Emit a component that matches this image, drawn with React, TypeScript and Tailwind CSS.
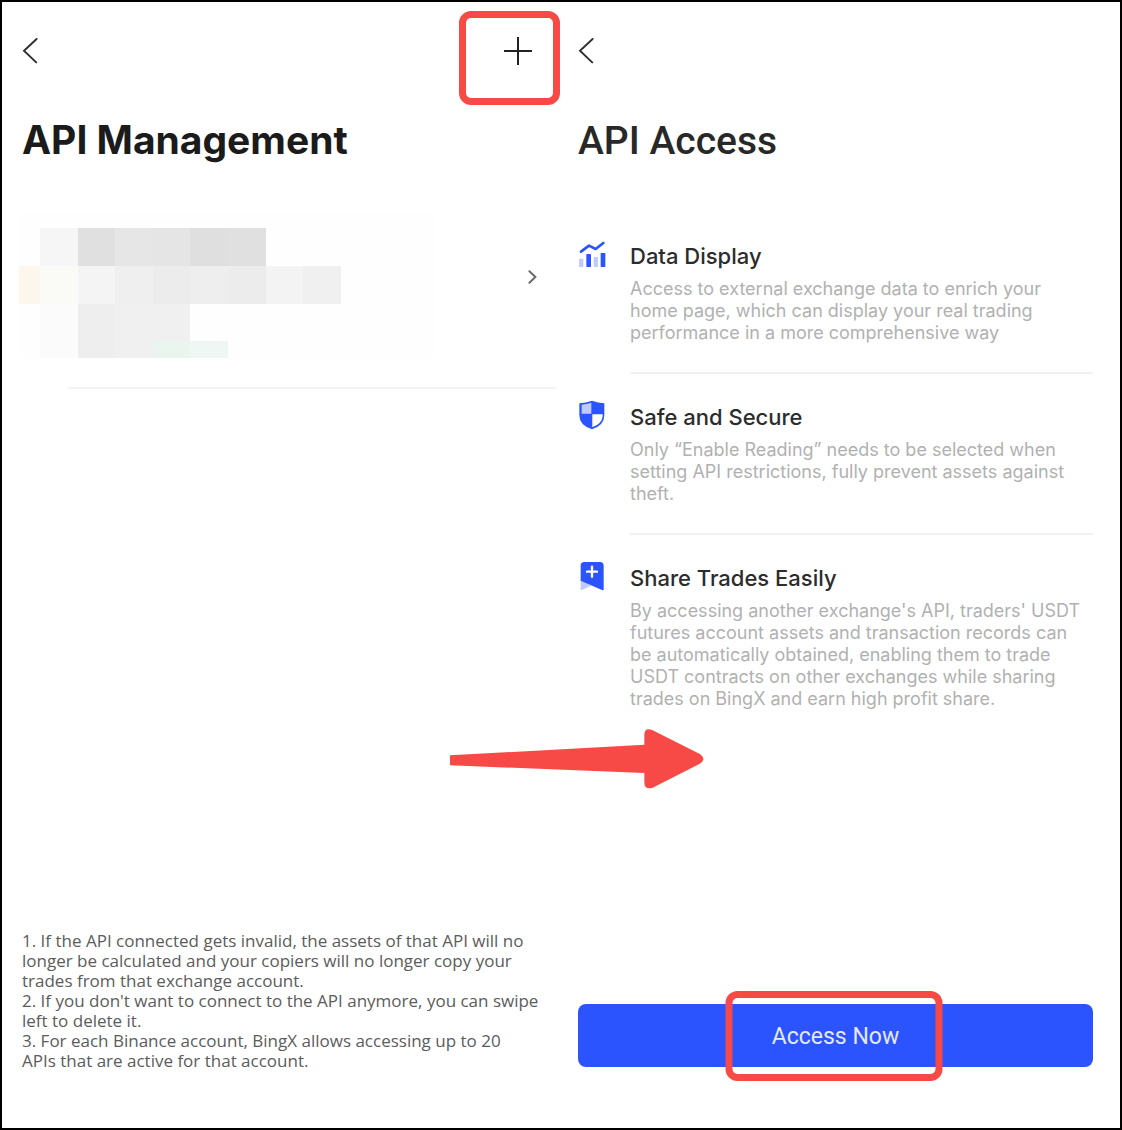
import type { ReactNode } from "react";

const BackIcon = () => (
  <svg width="16" height="26" viewBox="0 0 16 26" fill="none" stroke="#2e2e2e" strokeWidth="1.9" strokeLinecap="round">
    <path d="M14.6 1L2 12.8L14.2 24.4" />
  </svg>
);

const PlusIcon = () => (
  <svg width="30" height="30" viewBox="0 0 30 30" stroke="#222222" strokeWidth="2">
    <path d="M15 1V29M1 15H29" />
  </svg>
);

const ChevronRight = () => (
  <svg width="10" height="14" viewBox="0 0 10 14" fill="none" stroke="#6b6b6b" strokeWidth="2" strokeLinecap="round">
    <path d="M1.4 1.2L7.4 7L1.4 12.8" />
  </svg>
);

const ChartIcon = () => (
  <svg className="shrink-0" width="28" height="30" viewBox="24 27 84 90">
    <rect x="27" y="86" width="13" height="25" rx="2" fill="#bfcbff" />
    <rect x="49" y="72" width="14" height="39" rx="2" fill="#2b54ff" />
    <rect x="71" y="81" width="13" height="30" rx="2" fill="#bfcbff" />
    <rect x="92" y="69" width="14" height="42" rx="2" fill="#2b54ff" />
    <path d="M33 65L57 47L77 57L100 39" fill="none" stroke="#2b54ff" strokeWidth="8" strokeLinecap="round" strokeLinejoin="round" />
  </svg>
);

const ShieldIcon = () => (
  <svg className="shrink-0" width="28" height="30" viewBox="24 30 84 90">
    <path d="M66 32Q84 39 103 40V76Q103 106 66 118Q28 106 28 76V40Q48 39 66 32Z" fill="#2b54ff" />
    <path d="M64 38Q50 43 35 44V71H64Z" fill="#bfcbff" />
    <path d="M67 73H98V78Q96 101 67 112Z" fill="#ffffff" />
  </svg>
);

const BookmarkIcon = () => (
  <svg className="shrink-0" width="28" height="30" viewBox="24 33 84 90">
    <path d="M32 88V120Q34 121 37 119L63 107Z" fill="#bfcbff" />
    <path d="M32 92V47Q32 36 43 36H90Q101 36 101 47V117Q101 122 96 120Z" fill="#2b54ff" />
    <path d="M66 50V80M51 65H81" stroke="#ffffff" strokeWidth="7" strokeLinecap="round" />
  </svg>
);

const cells = [
  [21, 15, 38, 38, "#f6f6f6"],
  [59, 15, 37, 38, "#e0e0e0"],
  [96, 15, 38, 38, "#e6e6e6"],
  [134, 15, 37, 38, "#e5e5e5"],
  [171, 15, 38, 38, "#dfdfdf"],
  [209, 15, 38, 38, "#e0e0e0"],
  [0, 53, 21, 38, "#fdf6ec"],
  [21, 53, 38, 38, "#fafaf7"],
  [59, 53, 37, 38, "#f4f4f4"],
  [96, 53, 38, 38, "#efefef"],
  [134, 53, 37, 38, "#ececec"],
  [171, 53, 38, 38, "#eeeeee"],
  [209, 53, 38, 38, "#ececec"],
  [247, 53, 37, 38, "#f3f3f3"],
  [284, 53, 38, 38, "#f0f0f0"],
  [21, 91, 38, 54, "#fbfbfb"],
  [59, 91, 37, 54, "#eeeeee"],
  [96, 91, 38, 54, "#f0f0f0"],
  [134, 91, 37, 37, "#f0f0f0"],
  [134, 128, 37, 17, "#ebf5f0"],
  [171, 128, 38, 17, "#eef7f4"],
] as const;

// Account name and key stay pixelated
const HiddenAccount = () => (
  <svg width="415" height="145" viewBox="0 0 415 145" shapeRendering="crispEdges" aria-hidden="true">
    <rect width="415" height="145" fill="#fefefe" />
    {cells.map(([x, y, w, h, fill]) => (
      <rect key={`${x}-${y}`} x={x} y={y} width={w} height={h} fill={fill} />
    ))}
  </svg>
);

const features: { icon: ReactNode; title: string; text: string }[] = [
  {
    icon: <ChartIcon />,
    title: "Data Display",
    text: "Access to external exchange data to enrich your\nhome page, which can display your real trading\nperformance in a more comprehensive way",
  },
  {
    icon: <ShieldIcon />,
    title: "Safe and Secure",
    text: "Only “Enable Reading” needs to be selected when\nsetting API restrictions, fully prevent assets against\ntheft.",
  },
  {
    icon: <BookmarkIcon />,
    title: "Share Trades Easily",
    text: "By accessing another exchange's API, traders' USDT\nfutures account assets and transaction records can\nbe automatically obtained, enabling them to trade\nUSDT contracts on other exchanges while sharing\ntrades on BingX and earn high profit share.",
  },
];

const notes = [
  "1. If the API connected gets invalid, the assets of that API will no\nlonger be calculated and your copiers will no longer copy your\ntrades from that exchange account.",
  "2. If you don't want to connect to the API anymore, you can swipe\nleft to delete it.",
  "3. For each Binance account, BingX allows accessing up to 20\nAPIs that are active for that account.",
];

function Management() {
  return (
    <section className="flex flex-col pt-[34px] pb-[57px]">
      <header className="flex items-center justify-between pl-5 pr-7">
        <button aria-label="Back">
          <BackIcon />
        </button>
        <button aria-label="Add API" className="relative">
          <PlusIcon />
          <span className="absolute -left-11 -right-[27px] -top-[25px] -bottom-[39px] border-7 border-[#f74a46] rounded-xl" />
        </button>
      </header>
      <h1 className="mt-[50px] pl-5 text-[39px] leading-12 font-bold text-[#1b1b1b]">
        API Management
      </h1>
      <button aria-label="Open account" className="mt-[49px] pl-[17px] pr-[23px] flex justify-between items-start">
        <HiddenAccount />
        <span className="mt-[57px]">
          <ChevronRight />
        </span>
      </button>
      <hr className="mt-[29px] ml-[66px] mr-[5px] border-t-2 border-[#f3f3f3]" />
      <div className="mt-auto pl-5 font-['Open_Sans',sans-serif] text-[17px] leading-5 text-[#5c5c5c] whitespace-pre-line">
        {notes.map((note) => (
          <p key={note}>{note}</p>
        ))}
      </div>
    </section>
  );
}

function Access() {
  return (
    <section className="flex flex-col pt-[34px] pb-[61px] pl-[17px] pr-[27px]">
      <header className="flex items-center h-[30px]">
        <button aria-label="Back">
          <BackIcon />
        </button>
      </header>
      <h1 className="mt-[51px] font-['Roboto',sans-serif] text-[39px] leading-12 font-medium text-[#282828]">
        API Access
      </h1>
      <ul className="mt-[74px] flex flex-col gap-[26px]">
        {features.map(({ icon, title, text }) => (
          <li key={title} className="group flex gap-6">
            {icon}
            <div className="flex-1 pt-[3px] pb-7 border-b-2 border-[#f1f1f1] group-last:border-0">
              <h2 className="text-[22px] leading-7 font-medium text-[#2c2c2c]">{title}</h2>
              <p className="mt-2 text-[18px] leading-[22px] text-[#b1b1b1] whitespace-pre-line">{text}</p>
            </div>
          </li>
        ))}
      </ul>
      <button className="relative mt-auto h-[63px] pt-1 rounded-lg bg-[#2b54ff] font-['Roboto',sans-serif] text-[23px] text-[#e4e9ff]">
        Access Now
        <span className="absolute left-1/2 -translate-x-1/2 -ml-0.5 -top-[13px] -bottom-[14px] w-[217px] border-7 border-[#f74a46] rounded-xl" />
      </button>
    </section>
  );
}

export default function App() {
  return (
    <main className="relative grid grid-cols-2 min-h-screen border-2 border-black bg-white font-['Inter',sans-serif]">
      <Management />
      <Access />
      <svg className="absolute left-1/2 -ml-[111px] top-[727px]" width="254" height="60" viewBox="60 56 762 180" fill="#f74a46" aria-hidden="true">
        <path d="M60 135L643 103V74Q643 50 668 60L808 130Q832 146 808 161L668 232Q643 240 643 216V188L60 165Z" />
      </svg>
    </main>
  );
}
